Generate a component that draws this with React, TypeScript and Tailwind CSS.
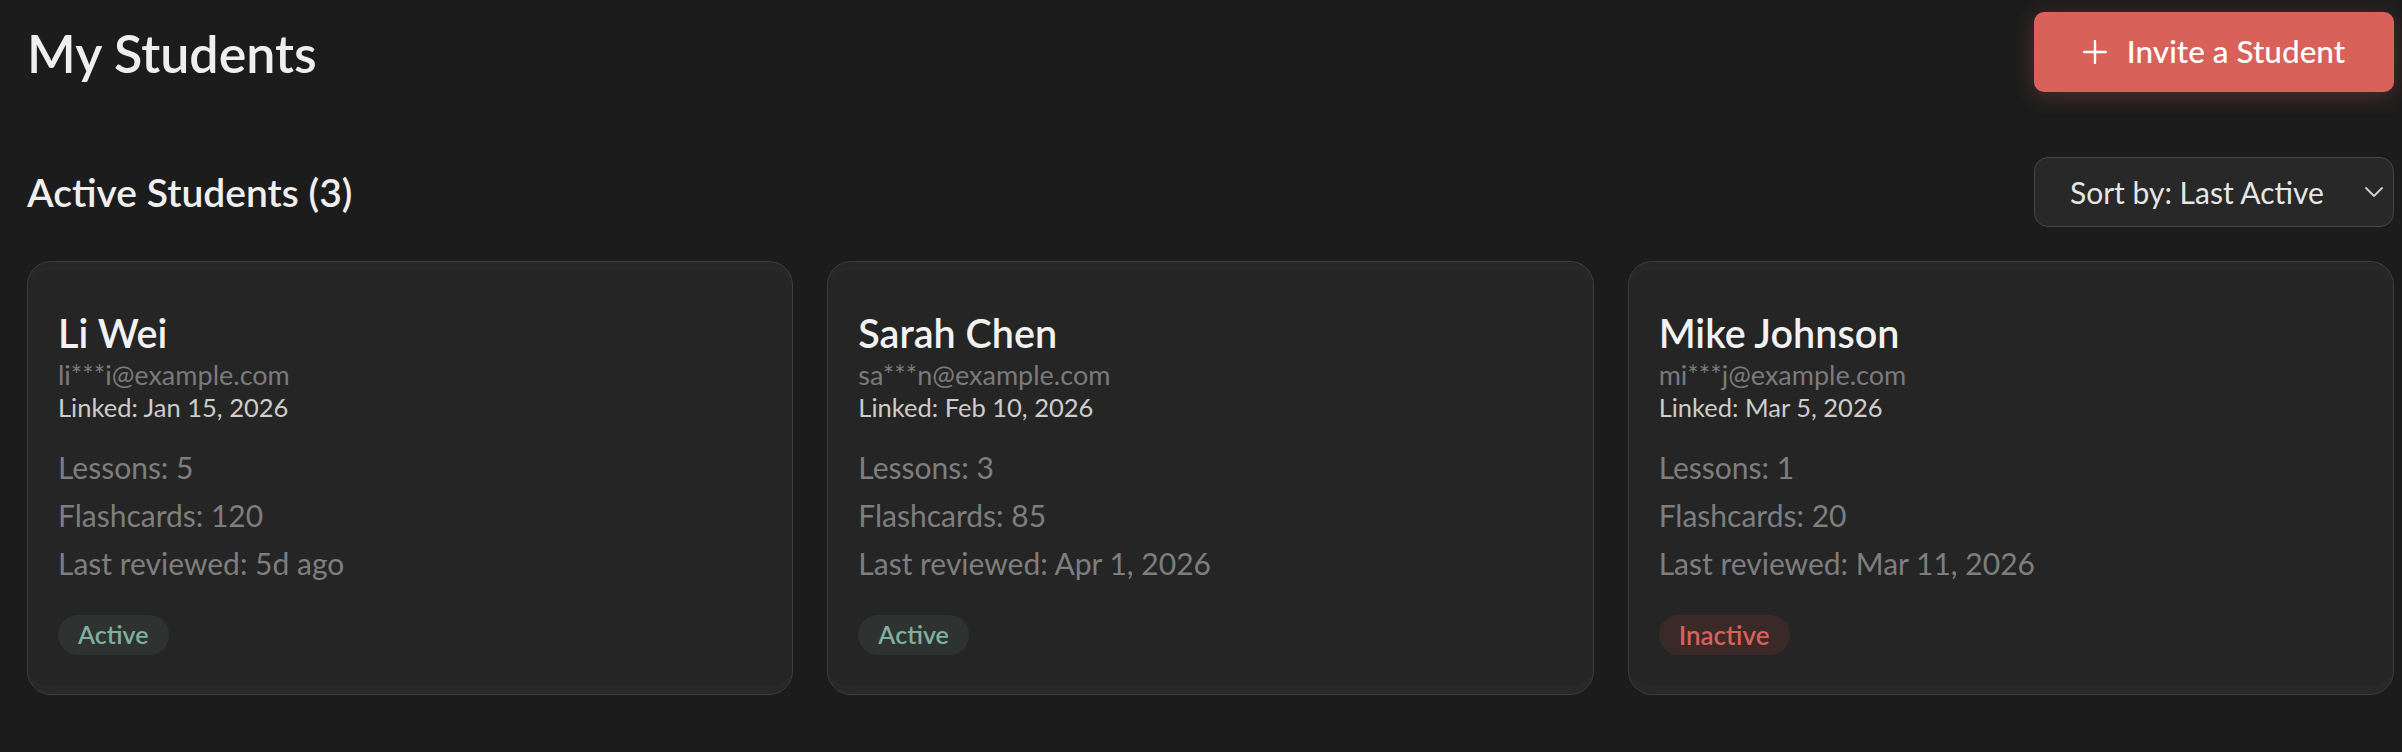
import React from "react";

type Student = {
  name: string;
  email: string;
  linked: string;
  lessons: number;
  flashcards: number;
  reviewed: string;
  active: boolean;
};

const students: Student[] = [
  { name: "Li Wei", email: "li***i@example.com", linked: "Jan 15, 2026", lessons: 5, flashcards: 120, reviewed: "5d ago", active: true },
  { name: "Sarah Chen", email: "sa***n@example.com", linked: "Feb 10, 2026", lessons: 3, flashcards: 85, reviewed: "Apr 1, 2026", active: true },
  { name: "Mike Johnson", email: "mi***j@example.com", linked: "Mar 5, 2026", lessons: 1, flashcards: 20, reviewed: "Mar 11, 2026", active: false },
];

function Card({ s }: { s: Student }) {
  return (
    <div className="rounded-[24px] border border-[#3d3d3d] bg-[#252525] pl-[30px] pr-[30px] pt-[45px] pb-[39px] shadow-[inset_0_10px_0_-2px_rgba(255,255,255,0.012),inset_0_-12px_0_-4px_rgba(255,255,255,0.015)]">
      <div className="text-[39.5px] leading-[52px] font-semibold text-[#f2f2f2]">{s.name}</div>
      <div className="text-[27px] leading-[32px] text-[#7a7a7a]">{s.email}</div>
      <div className="text-[25.5px] leading-[32px] text-[#cdcdcd]">Linked: {s.linked}</div>
      <div className="mt-[20px] text-[30px] leading-[48px] text-[#7e7e7e]">
        <div>Lessons: {s.lessons}</div>
        <div>Flashcards: {s.flashcards}</div>
        <div>Last reviewed: {s.reviewed}</div>
      </div>
      <div className="mt-[28px] flex">
        {s.active ? (
          <span className="inline-flex h-[40px] items-center rounded-full bg-[#2e3331] px-[20px] text-[25px] font-semibold text-[#7fb09f]">
            Active
          </span>
        ) : (
          <span className="inline-flex h-[40px] items-center rounded-full bg-[#3a2927] px-[20px] text-[26px] font-semibold text-[#d9605a]">
            Inactive
          </span>
        )}
      </div>
    </div>
  );
}

export default function App() {
  return (
    <div
      className="min-h-screen bg-[#1c1c1c] pl-[27px] pr-[8px] pt-[12px] pb-[40px]"
      style={{ fontFamily: "Lato, 'Noto Sans', sans-serif" }}
    >
      <div className="flex items-center justify-between">
        <h1 className="text-[52px] leading-[60px] font-semibold text-[#efefef] mt-[2px]">My Students</h1>
        <button className="flex h-[80px] w-[360px] items-center justify-center gap-[20px] rounded-[10px] bg-[#d8625a] text-[31.5px] font-medium text-white shadow-[0_4px_22px_rgba(217,98,90,0.28)]">
          <svg width="24" height="24" viewBox="0 0 24 24" fill="none" stroke="currentColor" strokeWidth="2.4" strokeLinecap="round">
            <path d="M12 1v22M1 12h22" />
          </svg>
          <span>Invite a Student</span>
        </button>
      </div>

      <div className="mt-[65px] flex items-center justify-between">
        <h2 className="text-[39px] leading-[44px] font-semibold text-[#efefef]">Active Students (3)</h2>
        <div className="flex h-[70px] w-[360px] items-center justify-between rounded-[14px] border border-[#474747] bg-[#282828] pl-[35px] pr-[10px] text-[30px] text-[#e6e6e6]">
          <span>Sort by: Last Active</span>
          <svg width="18" height="10" viewBox="0 0 18 10" fill="none" stroke="#d0d0d0" strokeWidth="1.8" strokeLinecap="round" strokeLinejoin="round">
            <path d="M1 1l8 8 8-8" />
          </svg>
        </div>
      </div>

      <div className="mt-[34px] grid grid-cols-3 gap-[34px]">
        {students.map((s) => (
          <Card key={s.name} s={s} />
        ))}
      </div>
    </div>
  );
}
